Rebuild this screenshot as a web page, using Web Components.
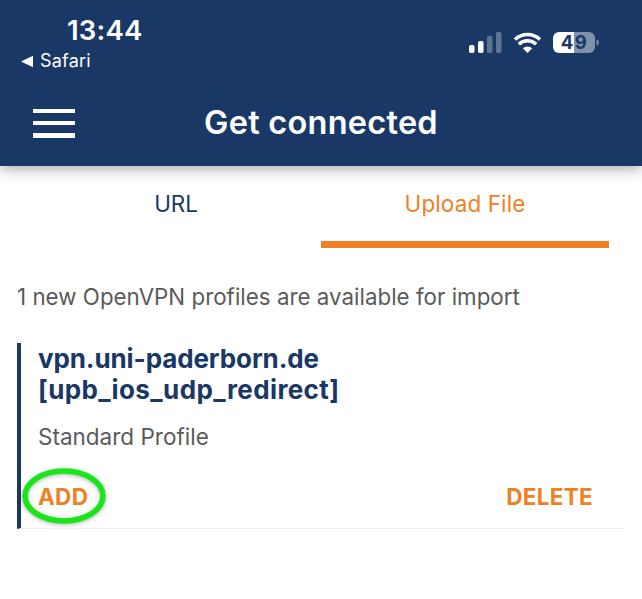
<!DOCTYPE html>
<html><head><meta charset="utf-8"><style>
html,body{margin:0;padding:0;background:#fff;}
body{width:642px;height:599px;overflow:hidden;font-family:Inter,"Liberation Sans",sans-serif;}
</style></head><body>
<app-header></app-header>
<tab-bar></tab-bar>
<import-note>1 new OpenVPN profiles are available for import</import-note>
<profile-card></profile-card>
<script>
function def(name,html){customElements.define(name,class extends HTMLElement{constructor(){super();this.attachShadow({mode:'open'}).innerHTML=html;}});}
def('status-bar',`<style>
:host{display:flex;justify-content:space-between;height:82px;box-sizing:border-box;padding:15px 42px 0 20px;color:#fff}
.l{display:flex;flex-direction:column}
.t{font-size:27.500px;font-weight:600;line-height:30px;margin-left:47px;letter-spacing:.2px}
.s{display:flex;align-items:center;gap:6px;font-size:18px;line-height:22px;margin-top:5px;letter-spacing:.2px}
.r{padding-top:15px}
svg{display:block}
</style>
<div class="l"><div class="t">13:44</div><div class="s"><svg width="14" height="13" viewBox="0 0 14 13"><path d="M1 6.500 13 .8v11.400z" fill="#fff"/></svg><span>Safari</span></div></div>
<div class="r"><svg width="135" height="26" viewBox="0 0 135 26">
<g fill="#fff"><rect x="4" y="15" width="5.500" height="8" rx="1.800"/><rect x="13" y="11" width="5.500" height="12" rx="1.800"/></g>
<g fill="#fff" fill-opacity=".3"><rect x="22" y="6" width="5.500" height="17" rx="1.800"/><rect x="31" y="2" width="5.500" height="21" rx="1.800"/></g>
<path d="M62.500 23 57.800 18.300A6.800 6.800 0 0 1 67.200 18.300Z" fill="#fff"/>
<path d="M53.800 14.200A12.600 12.600 0 0 1 71.200 14.200M50 9.500A18 18 0 0 1 75 9.500" fill="none" stroke="#fff" stroke-width="3.400"/>
<path d="M109 2h15a6 6 0 0 1 6 6v9a6 6 0 0 1-6 6h-15z" fill="#fff" fill-opacity=".45"/>
<path d="M94 2h15v21H94a6 6 0 0 1-6-6V8a6 6 0 0 1 6-6z" fill="#fff"/>
<path d="M131.500 9.500c1.500.4 2.300 1.600 2.300 3s-.8 2.600-2.300 3z" fill="#fff" fill-opacity=".45"/>
<text x="109.500" y="19.200" text-anchor="middle" font-family="Inter,'Liberation Sans',sans-serif" font-size="18.500" font-weight="700" fill="#193866" letter-spacing="1.500">49</text>
</svg></div>`);
def('app-header',`<style>
:host{display:block;height:166px;background:#193866;box-shadow:0 2px 14px rgba(0,0,0,.38);position:relative;color:#fff}
.bar{display:grid;grid-template-columns:1fr auto 1fr;align-items:center;height:84px;padding-left:33px;margin-top:-1px}
.b{width:42px;height:29px;display:flex;flex-direction:column;justify-content:space-between}
.b i{display:block;height:4.500px;background:#fff}
h1{margin:0;font-size:32.500px;font-weight:600;line-height:40px;letter-spacing:.25px;transform:translateX(-16.500px)}
</style>
<status-bar></status-bar>
<div class="bar"><div class="b"><i></i><i></i><i></i></div><h1>Get connected</h1><span></span></div>`);
def('tab-bar',`<style>
:host{display:grid;grid-template-columns:1fr 288px;box-sizing:border-box;height:82px;padding:0 33px 0 33px;font-size:22.500px;}
div{box-sizing:border-box;text-align:center;line-height:28px;padding-top:24px;}
.u{color:#193866;letter-spacing:-.1px;transform:translateX(-1px)}
.f{color:#f08024;border-bottom:7.500px solid #f08024;letter-spacing:.1px}
</style><div class="u">URL</div><div class="f">Upload File</div>`);
def('import-note',`<style>
:host{display:block;padding:35px 0 0 17px;font-size:22.300px;line-height:27px;color:#5a5a5a;letter-spacing:.03px}
</style><slot></slot>`);
def('profile-card',`<style>
:host{display:block;box-sizing:border-box;margin:33px 18px 0 17px;height:186px;border-left:4.500px solid #193866;border-bottom:1px solid #f0f0f0;padding:0 0 0 17px;position:relative}
h2{margin:0;font-size:26px;font-weight:700;line-height:31px;color:#193866;letter-spacing:-.1px}
h2 span{letter-spacing:.4px}
p{margin:18px 0 0;font-size:22.500px;line-height:27px;color:#5a5a5a}
.a{display:flex;justify-content:space-between;margin-top:32.500px;padding-right:31px;font-size:22.500px;font-weight:700;line-height:28px;color:#f08024;letter-spacing:.3px}
.ring{position:absolute;left:2px;top:126px;width:82px;height:54px;overflow:visible;filter:drop-shadow(0 1px 2px rgba(0,0,0,.3))}
</style>
<h2>vpn.uni-paderborn.de<br><span>[upb_ios_udp_redirect]</span></h2>
<p>Standard Profile</p>
<div class="a"><span>ADD</span><span>DELETE</span></div>
<svg class="ring" viewBox="0 0 82 54"><ellipse cx="41" cy="27" rx="39" ry="25" fill="none" stroke="#19e619" stroke-width="5.500"/></svg>`);
</script>
</body></html>
